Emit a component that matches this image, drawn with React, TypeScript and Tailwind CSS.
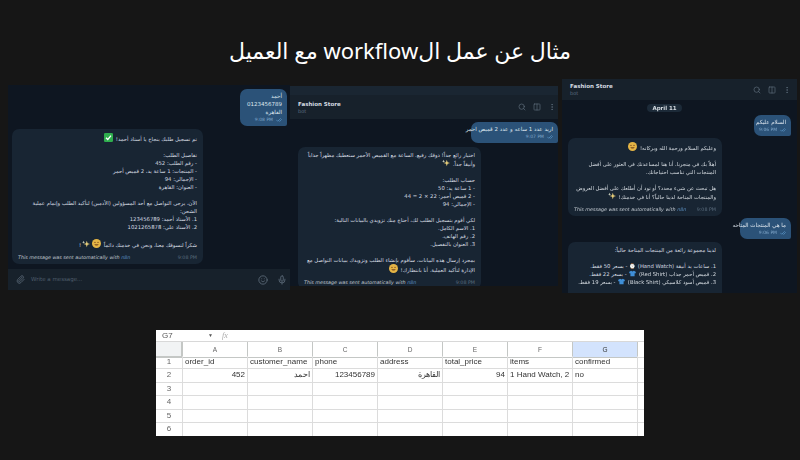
import { Search, Columns2, MoreVertical, Paperclip, Smile, Mic, CheckCheck } from "lucide-react";
import type { ReactNode } from "react";

const FONT = "font-['DejaVu_Sans','Noto_Sans',sans-serif]";

function Face() {
  return (
    <svg viewBox="0 0 10 10" className="inline-block w-[9px] h-[9px] align-[-1px] mx-[1px]">
      <circle cx="5" cy="5" r="5" fill="#e5b545" />
      <path d="M2.5 5.8c1 2 4 2 5 0z" fill="#7a4a1e" />
      <circle cx="3.3" cy="3.8" r=".7" fill="#7a4a1e" />
      <circle cx="6.7" cy="3.8" r=".7" fill="#7a4a1e" />
    </svg>
  );
}
function Sparkle() {
  return (
    <svg viewBox="0 0 10 10" className="inline-block w-[8px] h-[8px] align-[-1px] mx-[1px]">
      <path d="M6 1l1 3 3 1-3 1-1 3-1-3-3-1 3-1z" fill="#e8cf7a" />
      <path d="M2 1l.5 1.2L3.7 3l-1.2.5L2 4.7l-.5-1.2L.3 3l1.2-.8z" fill="#cfd3c0" />
    </svg>
  );
}
function Check() {
  return (
    <svg viewBox="0 0 10 10" className="inline-block w-[9px] h-[9px] align-[-1px] mx-[1px]">
      <rect width="10" height="10" rx="1.5" fill="#2fae4e" />
      <path d="M2.2 5.2l2 2 3.6-4.2" stroke="#fff" strokeWidth="1.4" fill="none" />
    </svg>
  );
}
function Shirt({ color }: { color: string }) {
  return (
    <svg viewBox="0 0 10 10" className="inline-block w-[7px] h-[7px] align-[-1px] mx-[1px]">
      <path d="M3 1L0 3l1 2 1-.5V9h6V4.500L9 5l1-2-3-2-2 1z" fill={color} />
    </svg>
  );
}

function Out({ children, time, className }: { children: ReactNode; time: string; className: string }) {
  return (
    <div className={`bg-[#2b5278] rounded-[7px] rounded-br-[2px] px-[5px] py-[3px] text-[#dfe7ef] ${className}`}>
      <div dir="rtl" className="leading-[8px] text-[5.500px]">{children}</div>
      <div className="flex justify-end items-center gap-[3px] text-[#7fa6c9] text-[4.500px] leading-[7px]">
        {time}
        <CheckCheck size={6} className="text-[#6fb1e6]" />
      </div>
    </div>
  );
}

function In({ children, time, className }: { children: ReactNode; time: string; className: string }) {
  return (
    <div className={`bg-[#182533] rounded-[7px] px-[6px] pt-[4px] pb-[2px] text-[#d5dbe1] ${className}`}>
      <div dir="rtl" className="text-[5.300px] leading-[8px]">{children}</div>
      <div className="flex justify-between items-center mt-[5px] text-[4.800px] leading-[8px]">
        <span className="italic text-[#c3cad1]">
          This message was sent automatically with <span className="text-[#5b8fc0]">n8n</span>
        </span>
        <span className="text-[#5d6f80]">9:08 PM</span>
      </div>
    </div>
  );
}

function Header({ compact }: { compact?: boolean }) {
  return (
    <div className={`bg-[#17212b] flex items-center justify-between shrink-0 ${compact ? "h-[21px] pl-[8px] pr-[6px]" : "h-[24px] pl-[8px] pr-[2px]"}`}>
      <div>
        <div className="text-[5.500px] leading-[8px] font-bold text-[#d5dbe1]">Fashion Store</div>
        <div className="text-[5px] leading-[7px] text-[#5d6f80]">bot</div>
      </div>
      <div className="flex items-center gap-[7px] text-[#5f6e7c]">
        <Search size={8} />
        <Columns2 size={8} />
        <MoreVertical size={8} />
      </div>
    </div>
  );
}

const lines = (rows: ReactNode[]) =>
  rows.map((r, i) => <div key={i} className="min-h-[8px]">{r}</div>);

function LeftShot() {
  return (
    <div className="w-[282px] h-[205px] mt-[85px] bg-[#0e1621] flex flex-col">
      <div className="flex-1 min-h-0 flex flex-col">
        <Out time="9:08 PM" className="w-[47px] self-end mr-[3px] mt-[4px]">
          <div>أحمد</div>
          <div>0123456789</div>
          <div>القاهرة</div>
        </Out>
        <In time="9:08 PM" className="w-[191px] ml-[4px] mt-[3px]">
          {lines([
            <>تم تسجيل طلبك بنجاح يا أستاذ أحمد! <Check /></>,
            "",
            "تفاصيل الطلب:",
            "- رقم الطلب: 452",
            "- المنتجات: 1 ساعة يد، 2 قميص أحمر",
            "- الإجمالي: 94",
            "- العنوان: القاهرة",
            "",
            "الآن، يرجى التواصل مع أحد المسؤولين (الأدمين) لتأكيد الطلب وإتمام عملية الشحن:",
            "1. الأستاذ أحمد: 123456789",
            "2. الأستاذ علي: 1021265878",
            "",
            <>شكراً لتسوقك معنا، ونحن في خدمتك دائماً <Face /><Sparkle />!</>,
          ])}
        </In>
      </div>
      <div className="h-[21px] shrink-0 bg-[#17212b] flex items-center pl-[8px] pr-[3px] gap-[6px] text-[#5f6e7c]">
        <Paperclip size={9} />
        <span className="flex-1 text-[5.500px] text-[#4f5e6c]">Write a message...</span>
        <Smile size={10} />
        <Mic size={10} className="ml-[3px]" />
      </div>
    </div>
  );
}

function MiddleShot() {
  return (
    <div className="w-[268px] h-[200px] mt-[86px] bg-[#0e1621] flex flex-col overflow-hidden">
      <div className="h-[9px] bg-[#1a2632] shrink-0" />
      <Header />
      <Out time="9:07 PM" className="w-[87px] self-end mt-[3px] whitespace-nowrap">
        اريد عدد 1 ساعه و عدد 2 قميص احمر
      </Out>
      <In time="9:07 PM" className="w-[183px] ml-[8px] mt-[4px]">
        {lines([
          <>اختيار رائع جداً! ذوقك رفيع. الساعة مع القميص الأحمر ستعطيك مظهراً جذاباً وأنيقاً جداً. <Sparkle /></>,
          "",
          "حساب الطلب:",
          "- 1 ساعة يد: 50",
          "- 2 قميص أحمر: 22 × 2 = 44",
          "- الإجمالي: 94",
          "",
          "لكي أقوم بتسجيل الطلب لك، أحتاج منك تزويدي بالبيانات التالية:",
          "1. الاسم الكامل.",
          "2. رقم الهاتف.",
          "3. العنوان بالتفصيل.",
          "",
          <>بمجرد إرسال هذه البيانات، سأقوم بإنشاء الطلب وتزويدك ببيانات التواصل مع الإدارة لتأكيد العملية. أنا بانتظارك! <Face /></>,
        ])}
      </In>
    </div>
  );
}

function RightShot() {
  return (
    <div className="w-[235px] h-[214px] mt-[79px] ml-[4px] bg-[#0e1621] flex flex-col overflow-hidden">
      <Header compact />
      <div className="self-center mr-[30px] mt-[4px] bg-[#1c2a38] rounded-full px-[5px] text-[5.500px] leading-[8px] font-bold text-[#d5dbe1]">April 11</div>
      <Out time="9:06 PM" className="w-[37px] self-end mr-[6px] mt-[3px] whitespace-nowrap">السلام عليكم</Out>
      <In time="9:06 PM" className="w-[154px] ml-[6px] mt-[2px] text-[5px]">
        {lines([
          <>وعليكم السلام ورحمة الله وبركاته! <Face /></>,
          "",
          "أهلاً بك في متجرنا. أنا هنا لمساعدتك في العثور على أفضل المنتجات التي تناسب احتياجاتك.",
          "",
          <>هل تبحث عن شيء محدد؟ أو تود أن أطلعك على أفضل العروض والمنتجات المتاحة لدينا حالياً؟ أنا في خدمتك! <Sparkle /></>,
        ])}
      </In>
      <Out time="9:06 PM" className="w-[51px] self-end mr-[6px] mt-[2px] whitespace-nowrap">ما هي المنتجات المتاحه</Out>
      <In time="9:06 PM" className="w-[154px] ml-[6px] mt-[3px] shrink-0">
        {lines([
          "لدينا مجموعة رائعة من المنتجات المتاحة حالياً:",
          "",
          "1. ساعات يد أنيقة (Hand Watch) ⌚ - بسعر 50 فقط.",
          <>2. قميص أحمر جذاب (Red Shirt) <Shirt color="#3f8fd8" /> - بسعر 22 فقط.</>,
          <>3. قميص أسود كلاسيكي (Black Shirt) <Shirt color="#3f8fd8" /> - بسعر 19 فقط.</>,
          "",
          <>كلها قطع مميزة وتضيف لمسة رائعة على مظهرك! أي واحدة منها نالت إعجابك وترغب في طلبها؟ <Face /></>,
        ])}
      </In>
    </div>
  );
}

const COLS = ["A", "B", "C", "D", "E", "F", "G"];
const cell = "border-r border-b border-[#dcdcdc] overflow-hidden whitespace-nowrap px-[2px] text-[8px] text-[#333] flex items-center";
const RIGHT = "justify-end";

function Sheet() {
  const rows: ReactNode[][] = [
    ["order_id", "customer_name", "phone", "address", "total_price", "items", "confirmed"],
    ["452", "احمد", "123456789", "القاهرة", "94", "1 Hand Watch, 2", "no"],
    ["", "", "", "", "", "", ""],
    ["", "", "", "", "", "", ""],
    ["", "", "", "", "", "", ""],
    ["", "", "", "", "", "", ""],
  ];
  return (
    <div className="w-[488px] h-[106px] mt-[37px] mx-auto bg-white overflow-hidden font-['Liberation_Sans',sans-serif]">
      <div className="h-[12px] flex items-center border-b border-[#d8d8d8] text-[8px] text-[#555]">
        <span className="w-[52px] pl-[6px]">G7</span>
        <span className="text-[5px] w-[14px]">▼</span>
        <span className="italic font-['Liberation_Serif',serif] text-[#aaa]">fx</span>
      </div>
      <div className="grid grid-cols-[27px_repeat(7,65px)_1fr] auto-rows-[13.500px]">
        <div className="bg-[#f1f3f4] border-r-2 border-b-2 border-[#c4c7c5] h-[16px]" />
        {COLS.map((c) => (
          <div key={c} className={`h-[16px] border-r border-b border-[#c4c7c5] text-[6.500px] flex items-center justify-center ${c === "G" ? "bg-[#d3e3fd] text-[#333]" : "bg-white text-[#666]"}`}>{c}</div>
        ))}
        <div className="h-[16px] border-b border-[#dcdcdc]" />
        {rows.map((r, i) => (
          <div key={i} className="contents">
            <div className={`${cell} justify-center text-[6.500px] text-[#666]`}>{i + 1}</div>
            {r.map((v, j) => (
              <div key={j} className={`${cell} ${i === 1 && j < 5 ? RIGHT : ""} ${i === 1 && (j === 1 || j === 3) ? "text-[5.500px]" : ""}`}>{v}</div>
            ))}
            <div className="border-b border-[#dcdcdc]" />
          </div>
        ))}
      </div>
    </div>
  );
}

export default function App() {
  return (
    <div className={`w-[800px] h-[460px] bg-[#161616] overflow-hidden ${FONT}`}>
      <h1 dir="rtl" className="h-[34px] mt-[32px] mb-[-66px] text-center text-white text-[22px] leading-[36px] font-['Noto_Sans','DejaVu_Sans',sans-serif]">
        مثال عن عمل الworkflow مع العميل
      </h1>
      <div className="flex items-start pl-[8px] h-[293px] blur-[0.4px]">
        <LeftShot />
        <MiddleShot />
        <RightShot />
      </div>
      <div className="blur-[0.3px]">
        <Sheet />
      </div>
    </div>
  );
}
